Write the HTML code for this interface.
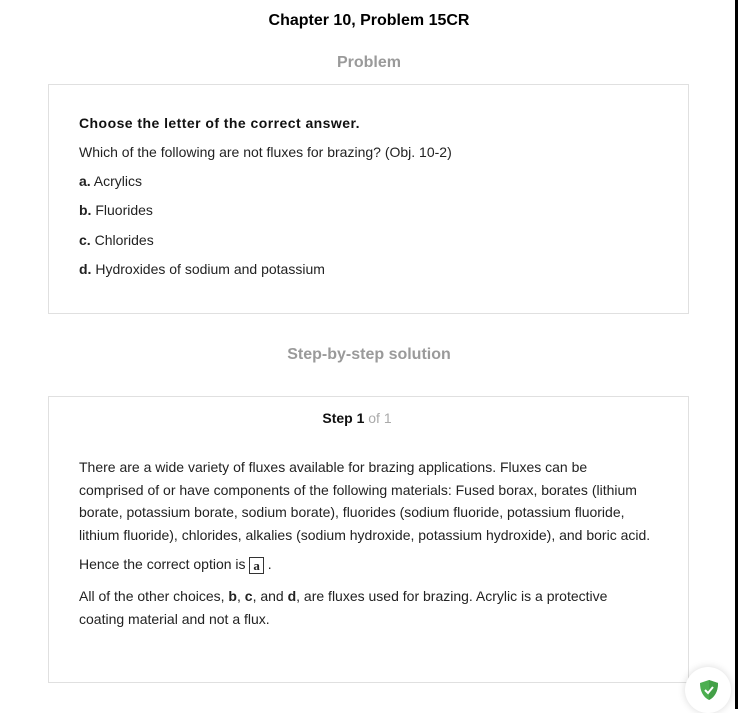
<!DOCTYPE html>
<html><head><style>
body{margin:0;width:738px;height:709px;background:#fff;font-family:"Liberation Sans",Arial,sans-serif;color:#222;position:relative;overflow:hidden}
.rb{position:absolute;left:735px;top:0;width:3px;height:709px;background:#000}
.t{position:absolute;left:0;width:738px;text-align:center}
h1{position:absolute;left:0;width:738px;text-align:center;top:12px;margin:0;font-size:16px;font-weight:bold;color:#000}
.sec{position:absolute;left:0;width:738px;text-align:center;font-size:16px;font-weight:bold;color:#9a9a9a}
.box{position:absolute;left:48px;width:641px;border:1px solid #e0e0e0;box-sizing:border-box}
.l{position:absolute;left:79px;font-size:14px;color:#222;white-space:nowrap}
b{font-weight:bold}
.ch{font-weight:bold;letter-spacing:0.45px;color:#111}
.p{position:absolute;left:79px;width:620px;font-size:14px;line-height:22.5px;color:#222;white-space:nowrap}
.ans{display:inline-block;border:1px solid #333;font-family:"Liberation Serif",serif;font-weight:bold;font-size:13px;line-height:15px;padding:0 3px;vertical-align:middle}
</style></head><body>
<div class="rb"></div>
<h1>Chapter 10, Problem 15CR</h1>
<div class="sec" style="top:54px">Problem</div>
<div class="box" style="top:84px;height:230px"></div>
<div class="l ch" style="top:115px">Choose the letter of the correct answer.</div>
<div class="l" style="top:144px">Which of the following are not fluxes for brazing? (Obj. 10-2)</div>
<div class="l" style="top:173px"><b>a.</b> Acrylics</div>
<div class="l" style="top:202px"><b>b.</b> Fluorides</div>
<div class="l" style="top:232px"><b>c.</b> Chlorides</div>
<div class="l" style="top:261px"><b>d.</b> Hydroxides of sodium and potassium</div>
<div class="sec" style="top:346px">Step-by-step solution</div>
<div class="box" style="top:396px;height:287px"></div>
<div class="t" style="top:410px;font-size:14px;left:-12px"><b style="color:#111">Step 1</b> <span style="color:#aaa">of 1</span></div>
<div class="p" style="top:456px">There are a wide variety of fluxes available for brazing applications. Fluxes can be<br>comprised of or have components of the following materials: Fused borax, borates (lithium<br>borate, potassium borate, sodium borate), fluorides (sodium fluoride, potassium fluoride,<br>lithium fluoride), chlorides, alkalies (sodium hydroxide, potassium hydroxide), and boric acid.</div>
<div class="l" style="top:556px">Hence the correct option is <span class="ans">a</span> .</div>
<div class="p" style="top:585px">All of the other choices, <b>b</b>, <b>c</b>, and <b>d</b>, are fluxes used for brazing. Acrylic is a protective<br>coating material and not a flux.</div>
<div style="position:absolute;left:685px;top:667px;width:46px;height:46px;border-radius:50%;background:#fff;box-shadow:0 0 8px rgba(0,0,0,0.15)"></div>
<svg style="position:absolute;left:697px;top:678px" width="24" height="24" viewBox="0 0 24 24"><path d="M12 2 L21 5 C21 13 18 19 12 22 C6 19 3 13 3 5 Z" fill="#4caf50"/><path d="M12 2 L21 5 C21 13 18 19 12 22 Z" fill="#43a047"/><path d="M8 12 L11 15 L16 9" stroke="#fff" stroke-width="2" fill="none"/></svg>
</body></html>
